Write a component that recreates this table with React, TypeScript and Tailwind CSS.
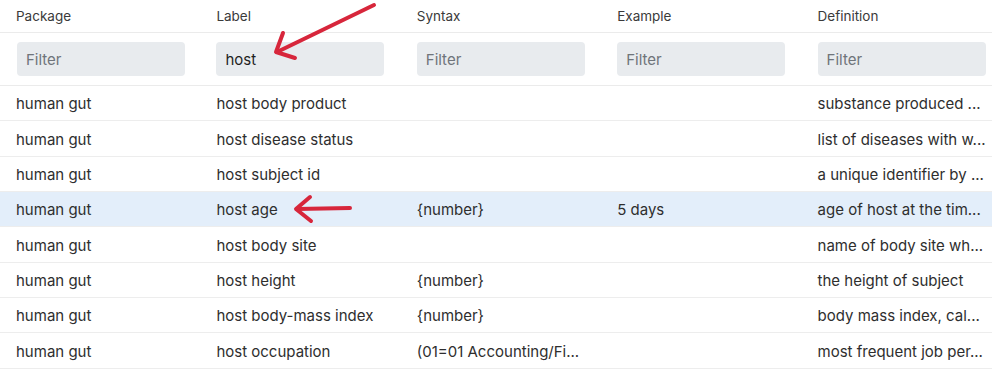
import React from 'react';

const columns = ['Package', 'Label', 'Syntax', 'Example', 'Definition'];

const rows = [
  { pkg: 'human gut', label: 'host body product', syntax: '', example: '', def: 'substance produced ...' },
  { pkg: 'human gut', label: 'host disease status', syntax: '', example: '', def: 'list of diseases with w...' },
  { pkg: 'human gut', label: 'host subject id', syntax: '', example: '', def: 'a unique identifier by ...' },
  { pkg: 'human gut', label: 'host age', syntax: '{number}', example: '5 days', def: 'age of host at the tim...', selected: true },
  { pkg: 'human gut', label: 'host body site', syntax: '', example: '', def: 'name of body site wh...' },
  { pkg: 'human gut', label: 'host height', syntax: '{number}', example: '', def: 'the height of subject' },
  { pkg: 'human gut', label: 'host body-mass index', syntax: '{number}', example: '', def: 'body mass index, cal...' },
  { pkg: 'human gut', label: 'host occupation', syntax: '(01=01 Accounting/Fi...', example: '', def: 'most frequent job per...' },
  // next row is only just peeking in at the bottom edge
  { pkg: '', label: '', syntax: '', example: '', def: '' },
];

// hand-drawn red pointers layered over the table
const Arrows = () => (
  <svg className="pointer-events-none absolute left-0 top-0" width={992} height={379}>
    <g stroke="#d7263b" strokeWidth={4} strokeLinecap="round" strokeLinejoin="round" fill="none">
      <path d="M374 5 L277 52" />
      <path d="M283 33 L276 52 L295 58" />
      <path d="M350 208 L297 209" />
      <path d="M310 197 L296 209 L311 221" />
    </g>
  </svg>
);

export default function App() {
  return (
    <div
      className="relative h-[379px] w-[992px] overflow-hidden bg-white text-[#2e2e2e]"
      style={{ fontFamily: 'Inter, "Noto Sans", sans-serif' }}
    >
      <div className="w-[1003px]">
        {/* header */}
        <div className="grid h-[33px] grid-cols-[repeat(5,200.4px)] border-b border-[#ebebeb]">
          {columns.map((c) => (
            <div key={c} className="flex items-center pl-4 text-[13.5px] text-[#3a3a3a]">
              {c}
            </div>
          ))}
        </div>
        {/* filters */}
        <div className="grid h-[53px] grid-cols-[repeat(5,200.4px)] border-b border-[#ebebeb] pt-[9px]">
          {columns.map((c, i) => (
            <div key={c} className={i === 0 ? 'pl-[17px]' : 'pl-4'}>
              <div
                className={
                  'flex h-[34px] w-[168px] items-center rounded-[4px] bg-[#e8ebee] pl-[9px] pt-[2px] text-[15px] ' +
                  (c === 'Label' ? 'text-[#1f1f1f]' : 'text-[#6f747a]')
                }
              >
                {c === 'Label' ? 'host' : 'Filter'}
              </div>
            </div>
          ))}
        </div>
        {/* rows */}
        {rows.map((r, i) => (
          <div
            key={i}
            className={
              'grid h-[35.35px] grid-cols-[repeat(5,200.4px)] border-b border-[#ededed] text-[15px] ' +
              (r.selected ? 'bg-[#e3eefa]' : 'bg-white')
            }
          >
            <div className="flex items-center pl-4 pt-[3px]">{r.pkg}</div>
            <div className="flex items-center pl-4 pt-[3px]">{r.label}</div>
            <div className="flex items-center pl-4 pt-[3px]">{r.syntax}</div>
            <div className="flex items-center pl-4 pt-[3px]">{r.example}</div>
            <div className="flex items-center whitespace-nowrap pl-4 pt-[3px]">{r.def}</div>
          </div>
        ))}
      </div>
      <Arrows />
    </div>
  );
}
